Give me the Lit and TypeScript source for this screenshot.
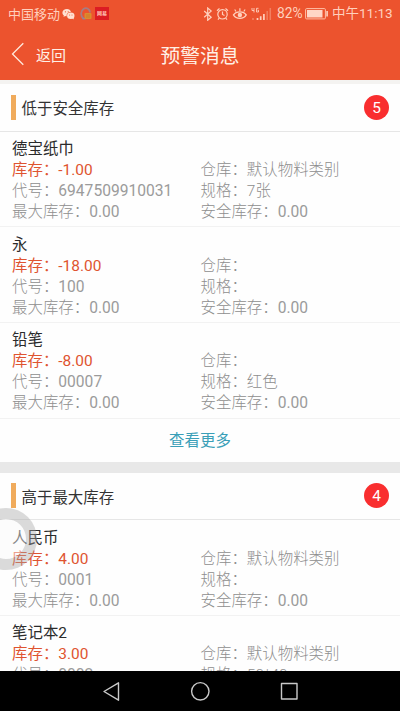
import { LitElement, html, css } from "lit";
import { customElement, property } from "lit/decorators.js";

interface Item {
  name: string;
  stock: string;
  depot: string;
  code: string;
  spec: string;
  max: string;
  safe: string;
}

const low: Item[] = [
  { name: "德宝纸巾", stock: "-1.00", depot: "默认物料类别", code: "6947509910031", spec: "7张", max: "0.00", safe: "0.00" },
  { name: "永", stock: "-18.00", depot: "", code: "100", spec: "", max: "0.00", safe: "0.00" },
  { name: "铅笔", stock: "-8.00", depot: "", code: "00007", spec: "红色", max: "0.00", safe: "0.00" },
];

const high: Item[] = [
  { name: "人民币", stock: "4.00", depot: "默认物料类别", code: "0001", spec: "", max: "0.00", safe: "0.00" },
  { name: "笔记本2", stock: "3.00", depot: "默认物料类别", code: "0002", spec: "50*40", max: "0.00", safe: "0.00" },
];

@customElement("status-bar")
export class StatusBar extends LitElement {
  static styles = css`
    :host { display: flex; align-items: center; height: 27px; padding: 0 8px; color: #ffd0bd; font-size: 13px; line-height: 27px; white-space: nowrap; }
    svg { display: block; flex: none; }
    .carrier { width: 54px; padding-top: 1px; }
    .wechat { margin-right: 5px; }
    .news { margin-left: 3px; width: 14px; height: 13px; background: #dc1c23; color: #ffc4b8; font-size: 5px; font-weight: 700; line-height: 12px; text-align: center; }
    .right { display: flex; align-items: center; margin-left: auto; }
    .pct { font-size: 13.8px; width: 28px; margin-left: 3px; }
    .time { width: 60px; margin-left: 3px; font-size: 13.5px; }
  `;

  render() {
    return html`
      <span class="carrier">中国移动</span>
      <svg class="wechat" width="13" height="12" viewBox="0 0 13 12">
        <path d="M5 1C2.300 1 .4 2.600.4 4.700c0 1.100.6 2.100 1.500 2.800L1.500 9l1.700-.9c.5.200 1 .2 1.500.2C4.300 5.800 6.200 4 8.900 4 8.600 2.200 7 1 5 1z" fill="#ffe0d2" />
        <ellipse cx="8.800" cy="7.700" rx="3.700" ry="3.200" fill="#ffe0d2" />
        <path d="M10 10l1.600 1.500.2-2.500z" fill="#ffe0d2" />
        <g fill="#ec532e"><circle cx="3.400" cy="3.800" r=".6" /><circle cx="6.200" cy="3.800" r=".6" /><circle cx="7.600" cy="6.900" r=".5" /><circle cx="10" cy="6.900" r=".5" /></g>
      </svg>
      <svg width="12" height="13" viewBox="0 0 12 13">
        <path d="M3.500 11.500C.2 9 .5 4 3.500 2S10 2 10 5.500" fill="none" stroke="#a77c83" stroke-width="1.800" />
        <path d="M2.500 11.700h3" stroke="#8b86a0" stroke-width="1.400" />
        <rect x="4.500" y="6" width="7" height="6" rx="1" fill="#dc8b2e" />
        <path d="M6 8h4M6 10h4" stroke="#c9772c" stroke-width=".7" />
      </svg>
      <span class="news">网易</span>
      <div class="right">
        <svg width="71" height="14" viewBox="0 0 71 14" fill="none" stroke="#ffd0bd" stroke-width="1.200">
          <path d="M1.200 4l7 6.300-3.500 3V1l3.500 3-7 6.300" />
          <circle cx="19.500" cy="7.300" r="4.700" />
          <path d="M19.500 4.500v3l2 1M14 3.700l2.500-2.200M25 3.700l-2.500-2.200M16.300 11l-1.300 1.700M22.700 11l1.300 1.700" />
          <path d="M30.500 8c2.700-4.200 10-4.200 12.700 0-2.700 4.500-10 4.500-12.700 0z" stroke-width="1.400" />
          <circle cx="36.900" cy="8" r="2.200" fill="#ffd0bd" stroke="none" />
          <path d="M36.900 4V1.200M33 4.500l-1.300-2M40.800 4.500l1.300-2" />
          <path d="M49 1v2.500h2M51 1v4.500M55.500 1.300h-2v3.700h2V3.200h-1" stroke-width=".9" />
          <path d="M54.500 13v-2M57.700 13V9.300M60.900 13V7" stroke-width="1.700" />
          <path d="M64.200 13V4M67.300 13V1" stroke-width="1.500" opacity=".35" />
          <path d="M50 13v-2" stroke-width="1.500" opacity=".4" />
        </svg>
        <span class="pct">82%</span>
        <svg width="24" height="12" viewBox="0 0 24 12">
          <rect x=".6" y=".6" width="19.800" height="10.300" rx="1" fill="none" stroke="#ffc0a8" stroke-width="1" />
          <rect x="2" y="2" width="15.500" height="7.500" fill="#ffd6c6" />
          <rect x="21.300" y="3" width="1.600" height="5.500" fill="#ffd0bd" />
        </svg>
        <span class="time">中午11:13</span>
      </div>
    `;
  }
}

@customElement("stock-item")
export class StockItem extends LitElement {
  @property({ attribute: false }) item!: Item;

  static styles = css`
    :host { display: block; box-sizing: border-box; height: 95.700px; padding: 6.500px 12px 0; border-bottom: 1px solid #f2f2f2; color: #8e8e8e; font-weight: 300; line-height: 21px; white-space: nowrap; }
    .name { color: #2b2b2b; font-weight: 400; height: 22px; line-height: 22px; }
    .grid { display: grid; grid-template-columns: 188.500px 1fr; grid-auto-rows: 21px; }
    .stock { color: #df5430; font-weight: 400; }
    .num { font-size: 15.6px; font-weight: 400; color: #9b9b9b; line-height: 1; }
  `;

  render() {
    const i = this.item;
    return html`
      <div class="name">${i.name}</div>
      <div class="grid">
        <span class="stock">库存：${i.stock}</span><span>仓库：${i.depot}</span>
        <span>代号：<span class="num">${i.code}</span></span><span>规格：${i.spec}</span>
        <span>最大库存：<span class="num">${i.max}</span></span><span>安全库存：<span class="num">${i.safe}</span></span>
      </div>
    `;
  }
}

@customElement("stock-section")
export class StockSection extends LitElement {
  @property() heading = "";
  @property({ type: Number }) count = 0;
  @property({ attribute: false }) items: Item[] = [];
  @property({ type: Boolean }) more = false;

  static styles = css`
    :host { display: block; }
    .head { box-sizing: border-box; height: 47.500px; display: flex; align-items: center; padding: 0 11px; border-bottom: 1px solid #e6e6e6; color: #333; }
    .mark { width: 5px; height: 25px; background: #f0ab5c; margin-right: 5.500px; }
    .count { margin-left: auto; width: 25px; height: 25px; border-radius: 50%; background: #f92e2f; color: #fff; line-height: 26px; text-align: center; }
    .more { height: 43px; line-height: 45px; text-align: center; color: #3a9fb8; }
  `;

  render() {
    return html`
      <div class="head">
        <span class="mark"></span><span>${this.heading}</span><span class="count">${this.count}</span>
      </div>
      ${this.items.map((i) => html`<stock-item .item=${i}></stock-item>`)}
      ${this.more ? html`<div class="more">查看更多</div>` : null}
    `;
  }
}

@customElement("app-root")
export class AppRoot extends LitElement {
  static styles = css`
    :host { display: flex; flex-direction: column; position: relative; height: 711px; overflow: hidden; background: #fefefe; font-family: Roboto, "Noto Sans CJK SC", sans-serif; font-size: 15.450px; font-weight: 400; }
    .top { flex: none; height: 80px; background: #ec532e; }
    .nav { display: grid; grid-template-columns: 1fr auto 1fr; align-items: center; height: 53px; color: #fff0e6; }
    .back { display: flex; align-items: center; gap: 12px; padding-left: 11px; font-size: 15px; }
    .back span { padding-top: 2px; }
    .title { font-size: 19.800px; padding-top: 1px; }
    .body { flex: 1; min-height: 0; overflow: hidden; }
    .strip { height: 4px; background: #f4f3f1; }
    .band { height: 11px; background: #e8e8e8; }
    .keys { flex: none; height: 40px; background: #000; display: flex; justify-content: center; align-items: center; }
    .keys svg { display: block; }
    .assist { position: absolute; left: -25px; top: 508px; box-sizing: border-box; width: 62px; height: 62px; border-radius: 50%; border: 11px solid rgba(165, 165, 165, 0.400); background: rgba(250, 250, 250, 0.450); background-clip: padding-box; }
  `;

  render() {
    return html`
      <div class="top">
        <status-bar></status-bar>
        <div class="nav">
          <div class="back">
            <svg width="13" height="24" viewBox="0 0 13 24"><path d="M12.300 1.200L1.500 12l10.800 10.800" fill="none" stroke="#ffe9dc" stroke-width="1.300" /></svg>
            <span>返回</span>
          </div>
          <div class="title">预警消息</div>
        </div>
      </div>
      <div class="body">
        <div class="strip"></div>
        <stock-section heading="低于安全库存" count="5" .items=${low} more></stock-section>
        <div class="band"></div>
        <stock-section heading="高于最大库存" count="4" .items=${high}></stock-section>
      </div>
      <div class="keys">
        <svg width="400" height="40" viewBox="0 0 400 40" fill="none" stroke="#c9c9c9" stroke-width="1.400" stroke-linejoin="round">
          <path d="M118.500 11.800v17.400L104 20.500z" />
          <circle cx="200.300" cy="20.300" r="8.700" />
          <rect x="281.500" y="12.500" width="15.500" height="15.500" />
        </svg>
      </div>
      <div class="assist"></div>
    `;
  }
}
